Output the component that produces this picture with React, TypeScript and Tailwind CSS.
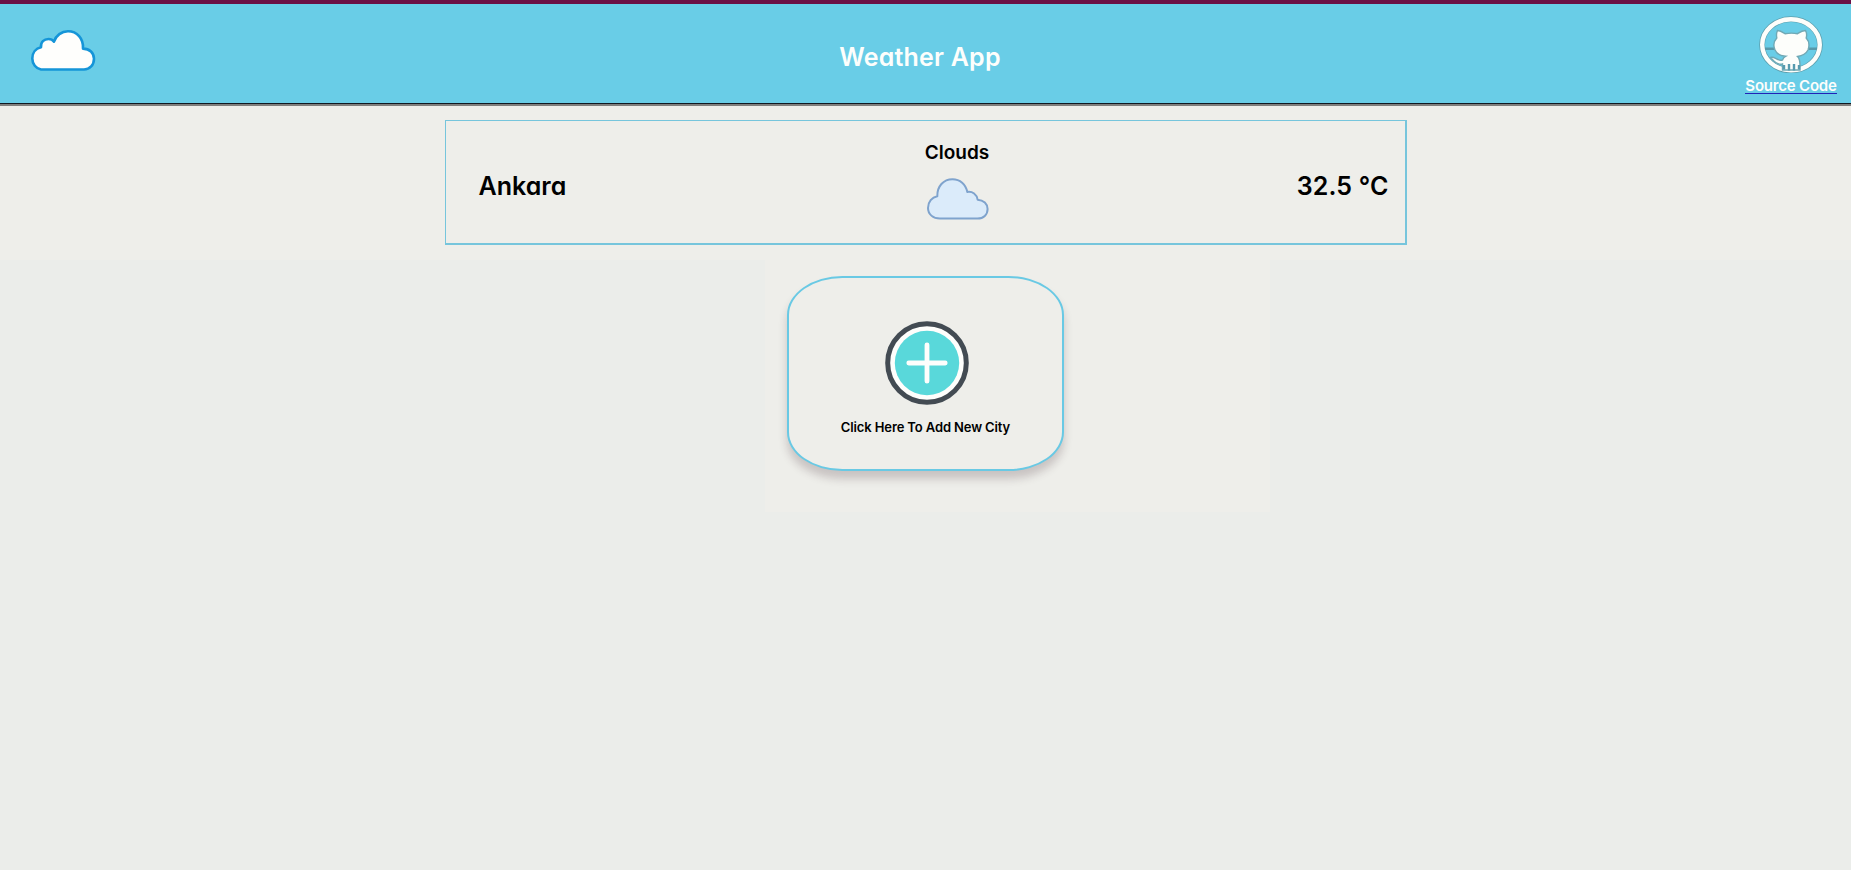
import React from "react";

function CloudLogo() {
  return (
    <svg className="block h-[41px] w-[65px]" viewBox="0 0 65 41">
      <path
        d="M10 39.5C5 38.5 1.3 34 1.3 28.5C1.3 22.5 5 18.3 10 17.2C9.5 12 13 9 17.5 9C20 9 21.8 10 23 11.6C25 5.5 30.5 1.3 37 1.3C46 1.3 52.6 8.5 52 18.6C58.6 18.6 63 23 63 28.8C63 35 58.8 39.5 53 39.5Z"
        fill="#fefefc"
        stroke="#1595d8"
        strokeWidth="2.6"
        strokeLinejoin="round"
      />
    </svg>
  );
}

function GithubLogo() {
  return (
    <svg className="block h-[57px] w-[64px]" viewBox="0 0 64 57">
      <ellipse cx="32" cy="28.8" rx="28.9" ry="25.6" fill="none" stroke="#5d9fae" strokeWidth="5.8" />
      <path d="M6 32.7H18M46 32.7H58" stroke="#5799aa" strokeWidth="2.4" />
      <ellipse cx="32" cy="28.8" rx="28.8" ry="25.5" fill="none" stroke="#fdfefb" strokeWidth="4.4" />
      <path
        d="M18.5 14.5C22 14.5 24.5 17 26 17.7C30 17 35 17 38.5 17.7C41 16 43 14.5 46.5 14.5C47.8 17 47.8 20 47.2 22C50 25 50.5 30 49 34C47 38 43 39.8 38.5 40.5C41 43 41 46 41 49V54H23.5V48C17 49.5 14 44 11.5 41.5C16 39.5 17 45.5 23.5 44C24 42.5 25 41 26.5 40.3C21 39.8 17.5 37.5 16 34C14 29.5 15 25 17.8 22C17.2 19 17.3 17 18.5 14.5Z"
        fill="#fdfefb"
        stroke="#70a9b5"
        strokeWidth="1.4"
      />
      <path d="M25 49V53.5M30 48V54.5M35 48V54.5M40 49V53.5" stroke="#579bae" strokeWidth="2.4" />
    </svg>
  );
}

function Cloud() {
  return (
    <svg className="block h-[42px] w-[62px]" viewBox="0 0 62 42">
      <path
        d="M13 40.6C6 40.6 1 36.2 1 30C1 23.7 5 19.2 10.3 18.3C10 8.3 16.5 1.2 25.5 1.2C33 1.2 38.8 6.2 40.3 14C45.5 13.2 49.8 16.4 50.6 21.7C56.6 22 60.6 26 60.6 31C60.6 36.8 56.5 40.6 50.5 40.6Z"
        fill="#dbebfa"
        stroke="#7fa3cd"
        strokeWidth="2"
        strokeLinejoin="round"
      />
    </svg>
  );
}

function PlusIcon() {
  return (
    <svg className="block h-[84px] w-[84px]" viewBox="0 0 84 84">
      <circle cx="42" cy="42" r="39.3" fill="#fefefc" stroke="#434b53" strokeWidth="5" />
      <circle cx="42" cy="42" r="32.2" fill="#59d8da" />
      <path d="M42 23.8V60.2M23.8 42H60.2" stroke="#fefefc" strokeWidth="4.8" strokeLinecap="round" />
    </svg>
  );
}

export default function App() {
  return (
    <div className="min-h-[870px] w-full overflow-hidden bg-[#ebedea] font-['Inter','Liberation_Sans',sans-serif] font-semibold text-black [font-feature-settings:'cv11']">
      <header className="flex h-[106px] items-start justify-between border-t-4 border-b-2 border-t-[#6b1045] border-b-[#7f7e7c] bg-[#69cde7] text-[#fdfefc] shadow-[inset_0_-1px_0_#101820]">
        <div className="w-[109px] pt-[26px] pl-[31px]">
          <CloudLogo />
        </div>
        <h1 className="pt-[36px] text-[25px] leading-[34px] tracking-[0.2px] whitespace-nowrap">Weather App</h1>
        <a className="flex w-[120px] flex-col items-center pt-[12px]" href="#source">
          <GithubLogo />
          <span className="mt-[6px] border-b border-[#2222b8] text-[15px] leading-[14px] tracking-[-0.2px] whitespace-nowrap">Source Code</span>
        </a>
      </header>
      <main>
        <section className="h-[154px] bg-[#eeeeea] pt-[14px]">
          <div className="mx-auto grid h-[125px] w-[962px] grid-cols-3 border-t border-r-2 border-b-2 border-l border-[#76c5dc]">
            <h2 className="pt-[48px] pl-[33px] text-[25px] leading-[34px]">Ankara</h2>
            <div className="flex flex-col items-center pt-[20px] pl-[64px]">
              <p className="text-[19px] leading-6">Clouds</p>
              <div className="mt-[13px] pl-[3px]">
                <Cloud />
              </div>
            </div>
            <p className="pt-[48px] pr-[16px] text-right text-[25px] leading-[34px] tracking-[0.15px]">32.5 °C</p>
          </div>
        </section>
        <section className="ml-[765px] h-[252px] w-[505px] bg-[#eeeeea] pt-[16px] pl-[22px]">
          <button className="flex h-[195px] w-[277px] flex-col items-center rounded-[20%] border-2 border-[#69c9e4] bg-[#eeeeea] pt-[42px] shadow-[0_8px_8px_rgba(70,45,55,0.22)]">
            <div className="pt-px pl-[3px]">
              <PlusIcon />
            </div>
            <span className="mt-[12px] text-[13px] leading-[20px] tracking-[-0.12px] whitespace-nowrap">Click Here To Add New City</span>
          </button>
        </section>
      </main>
    </div>
  );
}
